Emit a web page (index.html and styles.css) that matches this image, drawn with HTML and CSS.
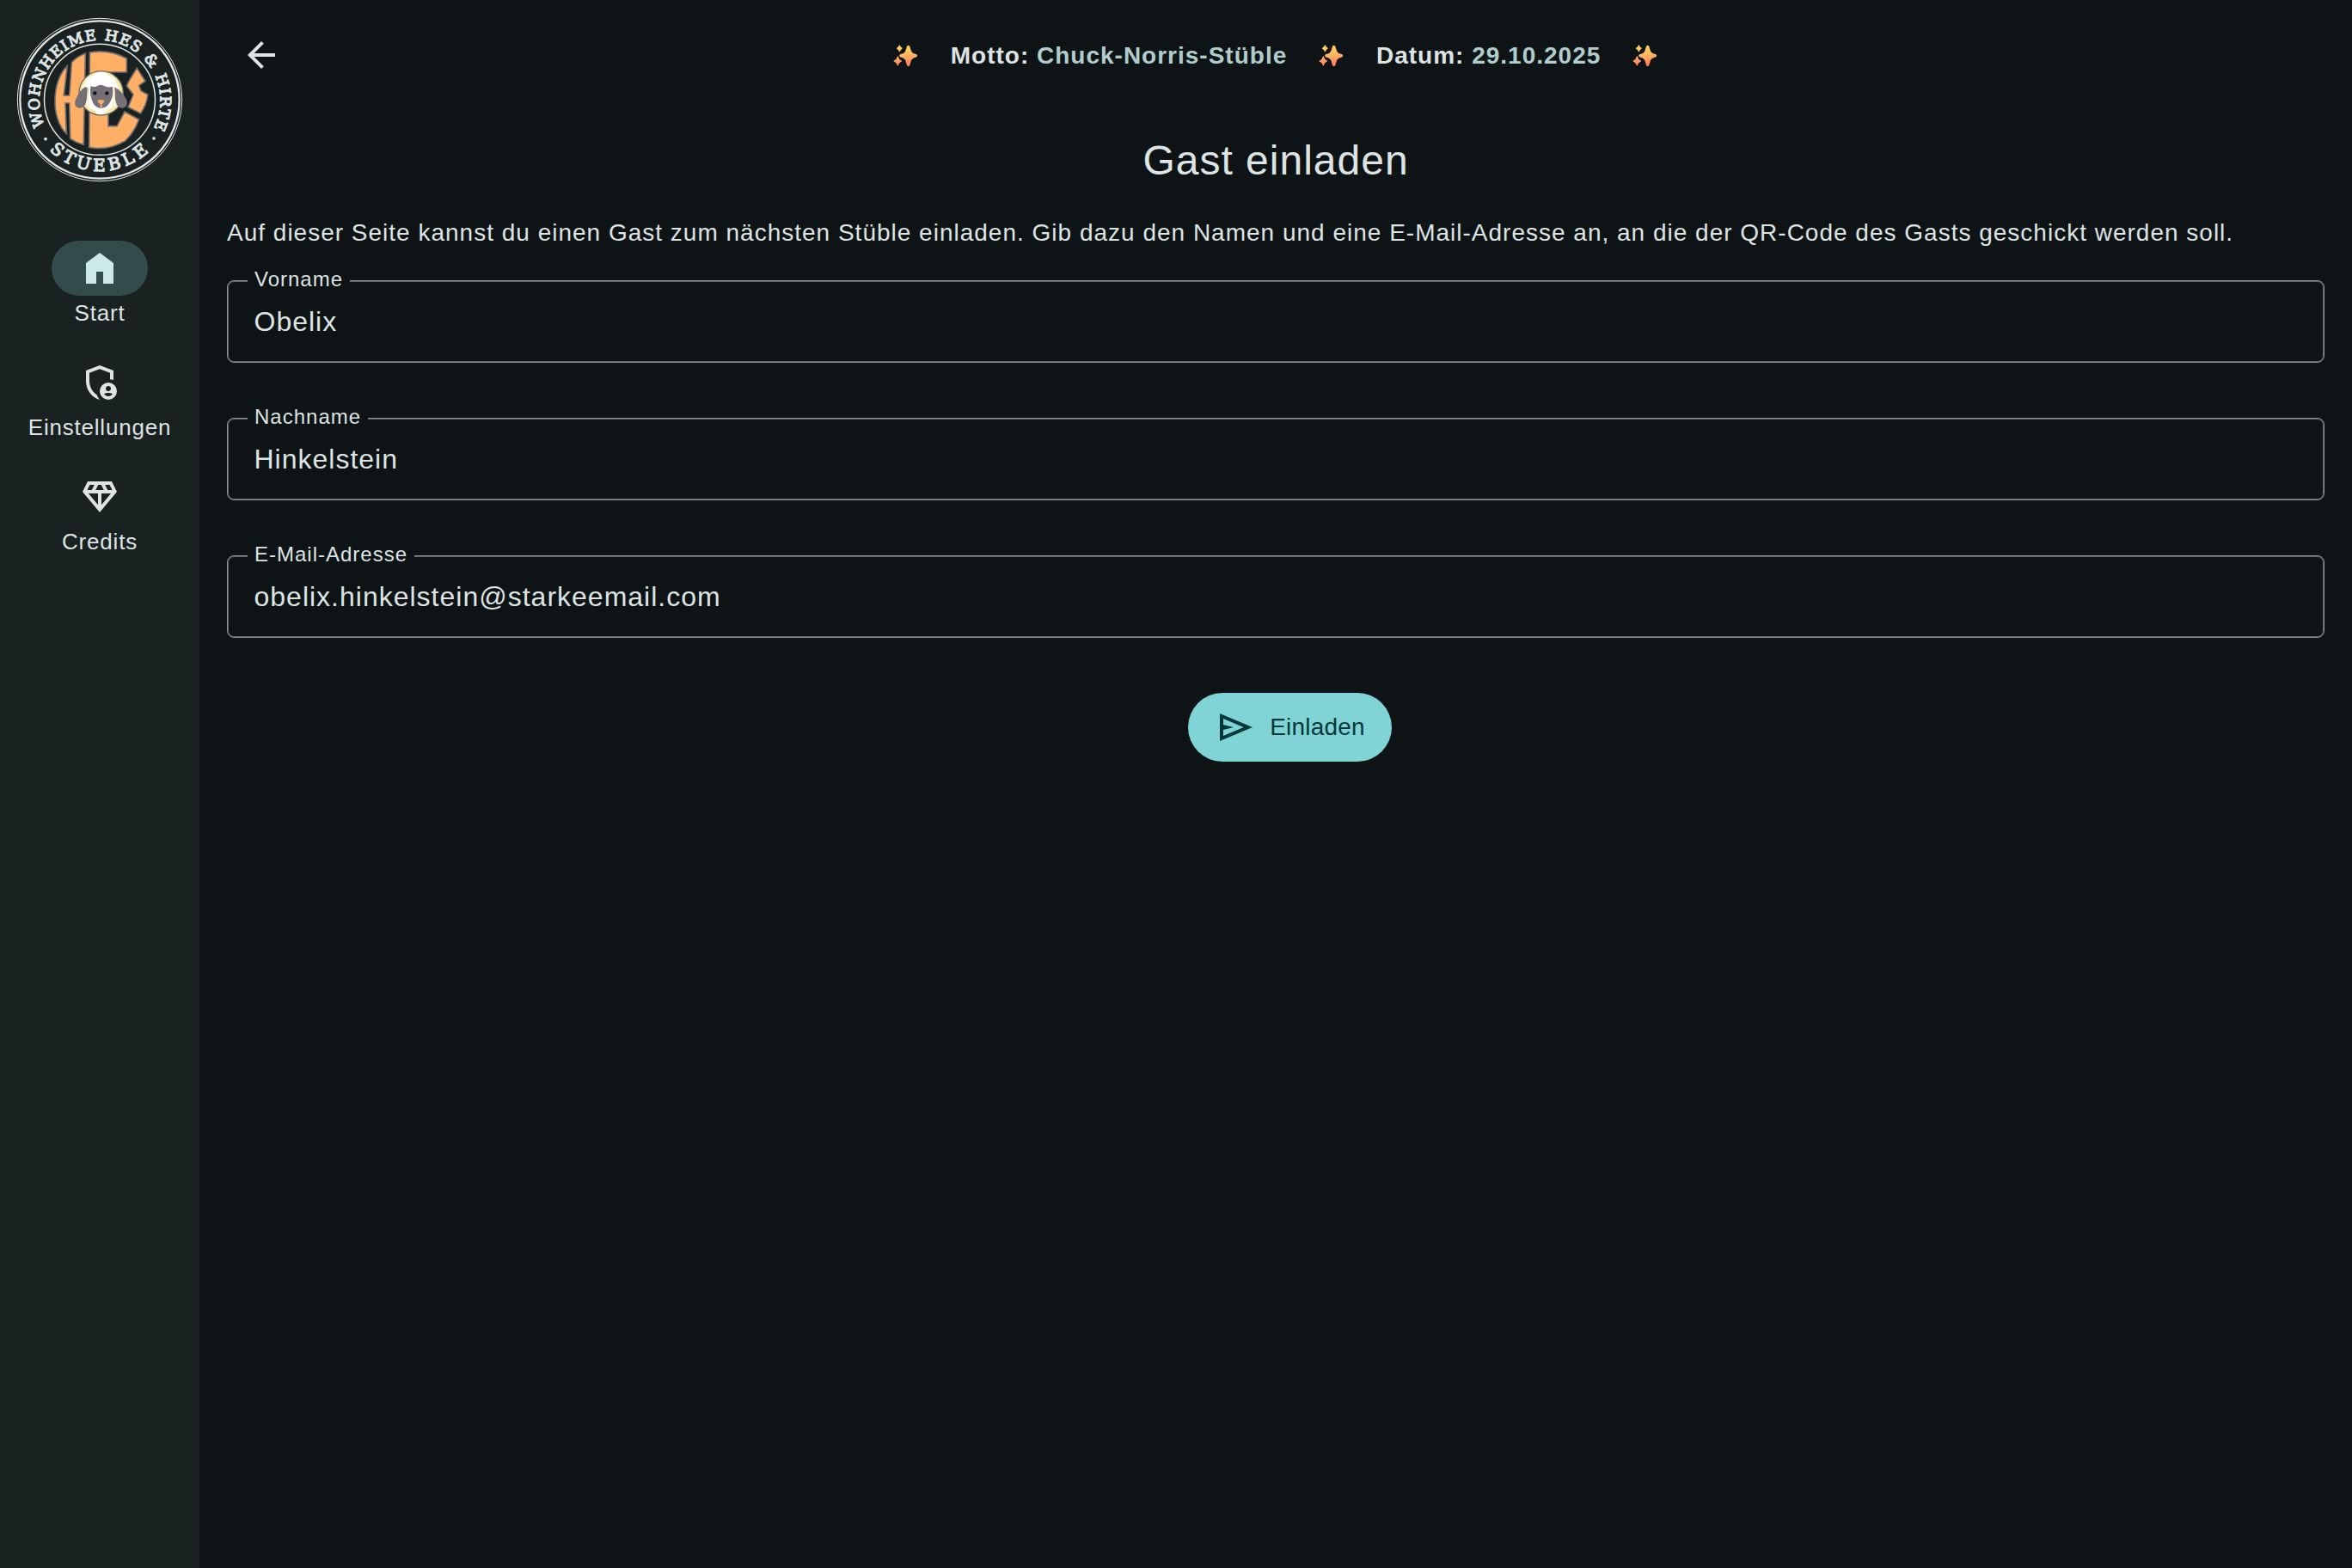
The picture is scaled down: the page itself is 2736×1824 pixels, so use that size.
FILE: index.html
```html
<!DOCTYPE html>
<html lang="de">
<head>
<meta charset="utf-8">
<title>Gast einladen</title>
<link rel="stylesheet" href="styles.css">
</head>
<body>
<svg class="defs" width="0" height="0" aria-hidden="true">
  <defs>
    <linearGradient id="glow" gradientUnits="userSpaceOnUse" x1="70" y1="66" x2="80" y2="140">
      <stop offset="0" stop-color="#ffd45c"/><stop offset=".5" stop-color="#ffb860"/><stop offset="1" stop-color="#ff7a5e"/>
    </linearGradient>
    <symbol id="sparkles" viewBox="57 64 86 78">
      <g fill="url(#glow)">
        <path d="M105 70Q110 63 115 70L120 86Q122 91 127 94L139 98Q144 102 139 107L127 111Q122 114 120 119L115 136Q110 144 105 136L100 119Q98 114 93 111L81 107Q76 102 81 98L93 94Q98 91 100 86Z"/>
        <path d="M77 67Q79 63 81 67Q83 73 87 74Q91 77 87 80Q83 81 81 87Q79 91 77 87Q75 81 71 80Q67 77 71 74Q75 73 77 67Z"/>
        <path d="M71 106Q73 101 75 106Q77 115 84 118Q91 121 84 124Q77 127 75 135Q73 141 71 135Q69 127 62 124Q55 121 62 118Q69 115 71 106Z"/>
      </g>
    </symbol>
  </defs>
</svg>

<nav class="rail">
  <svg class="logo" viewBox="48 48 600 600" role="img" aria-label="Wohnheime HES &amp; Hirte Stueble">
    <defs>
      <path id="arc-top" d="M156 438A211 211 0 1 1 537 446"/>
      <path id="arc-bottom" d="M172 524A249 249 0 0 0 520 528"/>
    </defs>
    <g class="rings">
      <ellipse cx="348" cy="348" rx="287" ry="284" stroke-width="3"/>
      <ellipse cx="348" cy="348" rx="278" ry="275" stroke-width="7"/>
      <circle cx="348" cy="347.500" r="193.500" stroke-width="4.500"/>
    </g>
    <text class="ring-text ring-text-top"><textPath href="#arc-top" textLength="852">WOHNHEIME HES &amp; HIRTE</textPath></text>
    <text class="ring-text ring-text-bottom"><textPath href="#arc-bottom" textLength="384">STUEBLE</textPath></text>
    <circle class="dot" cx="159" cy="485" r="5.500"/><circle class="dot" cx="537" cy="483" r="5.500"/>
    <g class="letters">
      <path d="M235 230C180 280 176 415 232 467L228 360H242L245 484Q265 498 292 505L298 186Q270 196 250 218L242 333H223Z"/>
      <path d="M313 183Q380 170 442 204V252H378V440H408L435 390L485 417Q468 462 438 491Q375 528 311 514Z"/>
      <path d="M478 238L507 283L485 299L492 317L516 330Q512 365 491 396L447 374L465 330L442 300Q447 285 478 238Z"/>
    </g>
    <circle cx="353" cy="325" r="77" fill="#f8e9a5" stroke="#6d6a6c" stroke-width="4"/>
    <path d="M353 251Q371 250 380 265Q402 266 405 290Q420 304 414 330Q416 362 397 372Q386 380 376 383Q364 400 352 400Q338 400 329 383Q314 382 305 370Q290 352 289 325Q284 303 298 288Q303 266 325 265Q334 250 353 251Z" fill="#fff"/>
    <path d="M298 303Q277 314 263 350Q257 372 275 377Q299 379 303 345L309 308Z M398 303Q425 316 442 348Q448 373 429 377Q406 378 402 347Z" fill="#747075"/>
    <path d="M317 300Q330 306 340 300Q354 292 365 301Q378 307 392 302Q399 330 385 355Q374 377 353 378Q329 376 321 350Q311 325 317 300Z" fill="#747075"/>
    <path d="M340 351Q352 345 364 351Q362 360 356 363V376H350V363Q343 360 340 351Z" fill="#ffad68"/>
    <circle cx="331" cy="325" r="6.500" fill="#111"/><circle cx="373" cy="325" r="6.500" fill="#111"/>
    <path d="M306 305Q302 340 311 370M399 305Q402 345 393 372" fill="none" stroke="#f8e9a5" stroke-width="3"/>
  </svg>
  <a class="dest active">
    <span class="pill"><svg class="icon" viewBox="0 0 24 24"><path d="M4 21V9l8-6 8 6v12h-6v-7h-4v7Z"/></svg></span>
    <span>Start</span>
  </a>
  <a class="dest">
    <span class="pill"><svg class="icon" viewBox="0 0 24 24"><path d="M17 17q.625 0 1.063-.438T18.500 15.500t-.438-1.063T17 14t-1.063.438T15.500 15.500t.438 1.063T17 17m0 3q.775 0 1.425-.363t1.050-.962q-.55-.325-1.175-.5T17 18t-1.300.175-1.175.5q.4.6 1.050.962T17 20m-5 2q-3.475-.875-5.737-3.988T4 11.100V5l8-3 8 3v5.675q-.475-.2-.975-.363T18 10.076V6.400l-6-2.250L6 6.400v4.700q0 1.175.312 2.350t.875 2.238T8.550 17.650t1.775 1.500q.275.8.725 1.525t1.025 1.300q-.025 0-.037.013T12 22m5 0q-2.075 0-3.537-1.463T12 17t1.463-3.537T17 12t3.538 1.463T22 17t-1.463 3.538T17 22"/></svg></span>
    <span>Einstellungen</span>
  </a>
  <a class="dest">
    <span class="pill"><svg class="icon" viewBox="0 0 24 24"><path d="M19 3H5L2 9l10 12L22 9l-3-6zM9.620 8l1.500-3h1.760l1.500 3H9.620zM11 10v6.680L5.440 10H11zm2 0h5.560L13 16.680V10zm6.260-2h-2.650l-1.500-3h2.650l1.500 3zM6.240 5h2.650l-1.500 3H4.740l1.500-3z"/></svg></span>
    <span>Credits</span>
  </a>
</nav>

<main class="page">
  <header class="topbar">
    <a class="back" aria-label="Zurück"><svg class="icon" viewBox="0 0 24 24"><path d="M7.825 13l5.600 5.600L12 20l-8-8 8-8 1.425 1.400-5.600 5.600H20v2z"/></svg></a>
    <div class="event">
      <svg class="sparkles"><use href="#sparkles"/></svg>
      <span>Motto: <b>Chuck-Norris-Stüble</b></span>
      <svg class="sparkles"><use href="#sparkles"/></svg>
      <span>Datum: <b>29.10.2025</b></span>
      <svg class="sparkles"><use href="#sparkles"/></svg>
    </div>
  </header>
  <h1>Gast einladen</h1>
  <p class="intro">Auf dieser Seite kannst du einen Gast zum nächsten Stüble einladen. Gib dazu den Namen und eine E-Mail-Adresse an, an die der QR-Code des Gasts geschickt werden soll.</p>
  <form class="form">
    <div class="field"><label for="first">Vorname</label><input id="first" value="Obelix"></div>
    <div class="field"><label for="last">Nachname</label><input id="last" value="Hinkelstein"></div>
    <div class="field"><label for="mail">E-Mail-Adresse</label><input id="mail" value="obelix.hinkelstein@starkeemail.com" spellcheck="false"></div>
    <button class="submit" type="button">
      <svg class="icon" viewBox="0 0 24 24"><path d="M3 20V4l19 8-19 8Zm2-3 11.850-5L5 7v3.500l6 1.500-6 1.500V17Z"/></svg>
      <span>Einladen</span>
    </button>
  </form>
</main>
</body>
</html>
```

FILE: styles.css
```css
:root {
  --surface: #0e1415;
  --rail: #1a2121;
  --text: #dee3e3;
  --outline: #899393;
  --outline-soft: #5e6767;
}

* { box-sizing: border-box; }

body {
  margin: 0;
  min-height: 100vh;
  display: flex;
  background: var(--surface);
  color: var(--text);
  font-family: "Liberation Sans", Arial, sans-serif;
  font-size: 28px;
  letter-spacing: 1px;
}

.defs { position: absolute; }

.icon {
  display: block;
  width: 48px;
  height: 48px;
  fill: currentColor;
}

/* Navigation rail */
.rail {
  width: 232px;
  flex: none;
  display: flex;
  flex-direction: column;
  align-items: center;
  padding-top: 16px;
  background: var(--rail);
}

.logo {
  width: 200px;
  height: 200px;
  margin-bottom: 64px;
}

.rings { fill: none; stroke: #dfe5e5; }
.dot { fill: #dfe5e5; }
.letters { fill: #ffb066; stroke: #6d6a6c; stroke-width: 5; }

.ring-text {
  font-family: "DejaVu Serif", serif;
  fill: #dfe5e5;
  stroke: #dfe5e5;
  stroke-width: 3.500;
  letter-spacing: 0;
}
.ring-text-top { font-size: 52px; word-spacing: 4px; }
.ring-text-bottom { font-size: 59px; }

.dest {
  display: flex;
  flex-direction: column;
  align-items: center;
  height: 133px;
  font-size: 26px;
  line-height: 40px;
  letter-spacing: .8px;
}

.pill {
  display: flex;
  align-items: center;
  justify-content: center;
  width: 112px;
  height: 64px;
  border-radius: 32px;
}

.active .pill {
  background: #324b4b;
  color: #cce8e8;
}

/* Page */
.page {
  flex: 1;
  padding: 0 32px;
}

.topbar {
  display: grid;
  grid-template-columns: 1fr auto 1fr;
  align-items: center;
  height: 128px;
}

.back { padding-left: 16px; }

.event {
  display: flex;
  align-items: center;
  gap: 37.500px;
  padding-top: 1px;
  font-weight: 700;
}
.event b { color: #b1cccc; }

.sparkles {
  width: 28.670px;
  height: 26px;
  margin: 0 .5px 0 -.5px;
}

h1 {
  margin: 27px 0 32px;
  font-size: 48px;
  font-weight: 400;
  line-height: 64px;
  text-align: center;
}

.intro {
  margin: 0 0 35px;
  line-height: 40px;
}

.form {
  display: flex;
  flex-direction: column;
  gap: 64px;
}

.field {
  position: relative;
  height: 96px;
  padding: 0 30.500px;
  border: 1px solid var(--outline);
  border-radius: 8px;
  box-shadow: inset 0 0 0 1px var(--outline-soft);
}

.field label {
  position: absolute;
  top: -18px;
  left: 23px;
  padding: 0 8px;
  background: var(--surface);
  font-size: 24px;
  line-height: 32px;
}

.field input {
  width: 100%;
  height: 100%;
  padding: 0;
  border: 0;
  outline: 0;
  background: none;
  color: inherit;
  font: inherit;
  font-size: 32px;
  letter-spacing: inherit;
}

.submit {
  align-self: center;
  display: flex;
  align-items: center;
  gap: 16px;
  height: 80px;
  margin-left: 33px;
  padding: 0 31px;
  border: 0;
  border-radius: 40px;
  background: #80d4d6;
  color: #003738;
  font: inherit;
  letter-spacing: .2px;
}
```
